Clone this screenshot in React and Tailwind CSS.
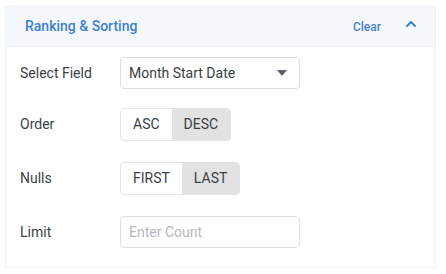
import { ChevronUp } from 'lucide-react'

function Row({ label, className = '', children }) {
  return (
    <div className={'flex items-center ' + className}>
      <div className="w-[100px] text-[14px] text-[#3a3f45]">{label}</div>
      {children}
    </div>
  )
}

function Toggle({ options, active }) {
  return (
    <div className="flex h-[33px] rounded-[4px] border border-[#e1e4e8] overflow-hidden">
      {options.map((o) => (
        <div
          key={o}
          className={
            'flex items-center px-[12px] text-[14px] text-[#3a3f45] ' +
            (o === active ? 'bg-[#e2e2e2]' : 'bg-white')
          }
        >
          {o}
        </div>
      ))}
    </div>
  )
}

export default function App() {
  return (
    <div className="h-[274px] w-[446px] bg-white pt-[6px] pl-[5px]" style={{ fontFamily: 'Roboto, sans-serif' }}>
      <div className="w-[431px] border border-[#eef1f5] border-b-0">
        {/* Header */}
        <div className="flex h-[40px] items-center bg-[#f5f9fe] border-b border-[#eaf0f7] pl-[19px] pr-[16px]">
          <span className="text-[14px] font-medium text-[#3d80d2]">Ranking &amp; Sorting</span>
          <span className="ml-auto text-[12px] font-medium text-[#4883c9]">Clear</span>
          <ChevronUp className="ml-[22px] h-[16px] w-[16px] text-[#3d80d2] -mt-[5px]" strokeWidth={3} />
        </div>

        {/* Body */}
        <div className="flex flex-col pl-[14px] pt-[10px] pb-[19px] border-b border-[#eef1f5]">
          <Row label="Select Field">
            <div className="flex h-[32px] w-[180px] items-center rounded-[4px] border border-[#dde0e5] pl-[8px] pr-[12px] text-[14px] text-[#3a3f45]">
              Month Start Date
              <svg className="ml-auto" width="10" height="6" viewBox="0 0 10 6">
                <path d="M0 0h10L5 6z" fill="#5a6068" />
              </svg>
            </div>
          </Row>
          <Row label="Order" className="mt-[19px]">
            <Toggle options={['ASC', 'DESC']} active="DESC" />
          </Row>
          <Row label="Nulls" className="mt-[21px]">
            <Toggle options={['FIRST', 'LAST']} active="LAST" />
          </Row>
          <Row label="Limit" className="mt-[21px]">
            <input
              placeholder="Enter Count"
              className="h-[32px] w-[180px] rounded-[4px] border border-[#dde0e5] px-[8px] text-[14px] text-[#3a3f45] placeholder:text-[#b4b9c0] outline-none"
            />
          </Row>
        </div>
      </div>
    </div>
  )
}
